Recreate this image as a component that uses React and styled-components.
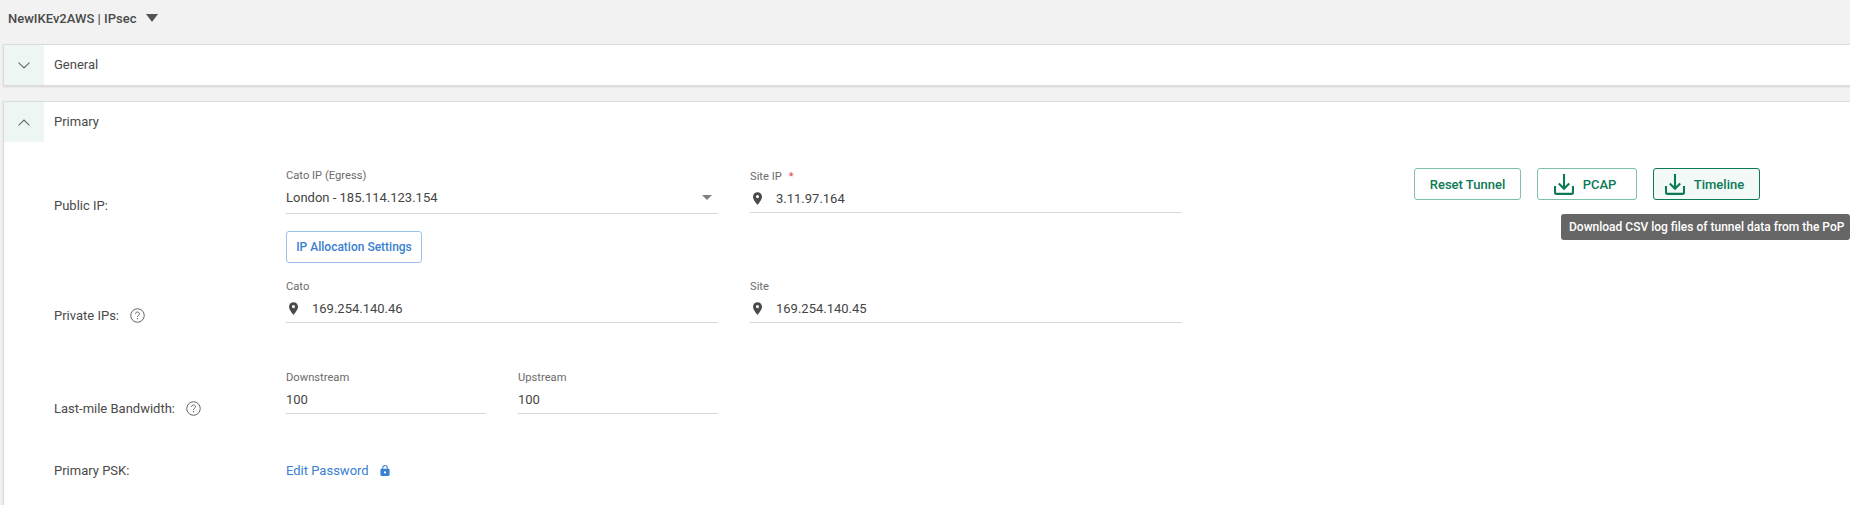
import React from "react";
import styled, { createGlobalStyle } from "styled-components";

const GlobalStyle = createGlobalStyle`
  html, body {
    margin: 0;
    padding: 0;
    background: #f2f2f2;
    overflow: hidden;
  }
  body {
    font-family: Roboto, "Liberation Sans", sans-serif;
    color: #4a4a4a;
  }
`;

const ChevronDown = () => (
  <svg width="12" height="7" viewBox="0 0 12 7" fill="none" stroke="#666" strokeWidth="1.1">
    <path d="M.6.6L6 6l5.4-5.4" />
  </svg>
);

const ChevronUp = () => (
  <svg width="12" height="7" viewBox="0 0 12 7" fill="none" stroke="#666" strokeWidth="1.1">
    <path d="M.6 6.4L6 1l5.4 5.4" />
  </svg>
);

const Pin = () => (
  <svg width="9" height="13" viewBox="0 0 10 14" fill="#4a4a4a">
    <path d="M5 0C2.2 0 0 2.2 0 5c0 3.6 5 9 5 9s5-5.4 5-9c0-2.8-2.2-5-5-5zm0 6.6A1.7 1.7 0 1 1 5 3.2a1.7 1.7 0 0 1 0 3.4z" />
  </svg>
);

const Help = () => (
  <svg width="15" height="15" viewBox="0 0 16 16" fill="none">
    <circle cx="8" cy="8" r="7.2" stroke="#5a5a5a" strokeWidth="1" />
    <path d="M5.9 6.3c0-1.2.9-2 2.1-2s2.1.8 2.1 1.9c0 1.6-2.1 1.6-2.1 3.2" stroke="#5a5a5a" strokeWidth="1" />
    <circle cx="8" cy="11.4" r=".7" fill="#5a5a5a" />
  </svg>
);

const Lock = () => (
  <svg width="10" height="11" viewBox="0 0 10 12" fill="#3a80d2">
    <path d="M8.6 4.2H8V3a3 3 0 0 0-6 0v1.2h-.6C.6 4.2 0 4.8 0 5.5v5.2c0 .7.6 1.3 1.4 1.3h7.2c.8 0 1.4-.6 1.4-1.3V5.5c0-.7-.6-1.3-1.4-1.3zM5 9.3a1.2 1.2 0 1 1 0-2.4 1.2 1.2 0 0 1 0 2.4zm1.9-5.1H3.1V3a1.9 1.9 0 0 1 3.8 0v1.2z" />
  </svg>
);

const Download = () => (
  <svg width="20" height="21" viewBox="0 0 20 21" fill="none" stroke="#0b7a55" strokeWidth="2.1">
    <path d="M1 12v6.5c0 .8.6 1.4 1.4 1.4h15.2c.8 0 1.4-.6 1.4-1.4V12" />
    <path d="M10 0v14.5M4.8 9.5l5.2 5.2 5.2-5.2" />
  </svg>
);

const Page = styled.div`
  width: 1850px;
  height: 505px;
  overflow: hidden;
`;

const TitleBar = styled.div`
  display: flex;
  align-items: center;
  height: 36px;
  padding-left: 8px;
  margin-bottom: 8px;
  font-size: 13px;
  font-weight: 500;
  color: #4a4a4a;
`;

const TitleArrow = styled.span`
  width: 0;
  height: 0;
  margin-left: 10px;
  border-left: 6px solid transparent;
  border-right: 6px solid transparent;
  border-top: 8px solid #555;
`;

const Card = styled.section`
  margin-left: 3px;
  margin-bottom: 15px;
  background: #fff;
  border: 1px solid #dcdcdc;
  border-right: 0;
  box-shadow: 0 1px 2px rgba(0, 0, 0, 0.12);
`;

const CardHeader = styled.div`
  display: flex;
  align-items: center;
  height: 40px;
  font-size: 13px;
  color: #4a4a4a;
`;

const CardTitle = styled.span`
  margin-top: -2px;
`;

const Toggle = styled.div`
  display: flex;
  align-items: center;
  justify-content: center;
  width: 40px;
  height: 40px;
  margin-right: 10px;
  background: #eef6f3;
`;

const Form = styled.div`
  padding: 26px 0 60px 50px;
`;

const Row = styled.div`
  display: flex;
  align-items: flex-start;
  margin-top: ${(p) => p.$top || 0}px;
`;

const RowLabel = styled.div`
  display: flex;
  align-items: center;
  gap: 11px;
  width: 232px;
  flex: none;
  height: 16px;
  margin-top: ${(p) => p.$top || 0}px;
  font-size: 13px;
  color: #4a4a4a;
`;

const Fields = styled.div`
  display: flex;
  gap: 32px;
`;

const Field = styled.div`
  width: ${(p) => p.$width || 432}px;
  margin-top: ${(p) => p.$top || 0}px;
`;

const Caption = styled.div`
  display: flex;
  gap: 7px;
  height: 14px;
  line-height: 16px;
  font-size: 11.2px;
  color: #6b6b6b;
`;

const Required = styled.span`
  color: #e8404a;
`;

const ValueLine = styled.div`
  display: flex;
  align-items: center;
  height: ${(p) => (p.$select ? 32 : 30)}px;
  padding-top: ${(p) => (p.$select ? 0 : 1)}px;
  padding-bottom: ${(p) => (p.$select ? 1 : 0)}px;
  box-sizing: border-box;
  border-bottom: 1px solid #d8d8d8;
  font-size: 13px;
  color: #444;
`;

const PinSlot = styled.span`
  display: flex;
  width: 26px;
  padding-left: 3px;
  box-sizing: border-box;
`;

const SelectArrow = styled.span`
  width: 0;
  height: 0;
  margin-left: auto;
  margin-right: 6px;
  border-left: 5px solid transparent;
  border-right: 5px solid transparent;
  border-top: 5px solid #808080;
`;

const Actions = styled.div`
  position: relative;
  display: flex;
  gap: 16px;
  margin-left: 232px;
`;

const ActionButton = styled.button`
  display: flex;
  align-items: center;
  justify-content: center;
  gap: 9px;
  width: ${(p) => p.$width}px;
  height: 32px;
  padding: 0 ${(p) => (p.$icon ? 4 : 0)}px 0 0;
  box-sizing: border-box;
  font-family: inherit;
  font-size: 13px;
  font-weight: 500;
  color: #0b7a55;
  background: ${(p) => (p.$active ? "#f3f9f7" : "#fff")};
  border: 1px solid ${(p) => (p.$active ? "#0b7a55" : "#7fc0aa")};
  border-radius: 3px;
`;

const Tooltip = styled.div`
  position: absolute;
  top: 46px;
  left: 147px;
  width: 289px;
  height: 26px;
  display: flex;
  align-items: center;
  padding-left: 8px;
  box-sizing: border-box;
  background: #666;
  border-radius: 3px;
  color: #fff;
  font-size: 12px;
  font-weight: 500;
  white-space: nowrap;
`;

const AllocButton = styled.button`
  display: block;
  width: 136px;
  height: 32px;
  margin: 17px 0 0 232px;
  padding: 0;
  box-sizing: border-box;
  font-family: inherit;
  font-size: 12px;
  font-weight: 500;
  color: #3a80d2;
  background: #fff;
  border: 1px solid #9cc2ea;
  border-radius: 3px;
`;

const PasswordLink = styled.a`
  display: flex;
  align-items: center;
  gap: 11px;
  height: 16px;
  font-size: 13px;
  color: #3a80d2;
`;

export default function App() {
  return (
    <Page>
      <GlobalStyle />
      <TitleBar>
        NewIKEv2AWS | IPsec
        <TitleArrow />
      </TitleBar>
      <Card>
        <CardHeader>
          <Toggle>
            <ChevronDown />
          </Toggle>
          <CardTitle>General</CardTitle>
        </CardHeader>
      </Card>
      <Card>
        <CardHeader>
          <Toggle>
            <ChevronUp />
          </Toggle>
          <CardTitle>Primary</CardTitle>
        </CardHeader>
        <Form>
          <Row>
            <RowLabel $top={29}>Public IP:</RowLabel>
            <Fields>
              <Field>
                <Caption>Cato IP (Egress)</Caption>
                <ValueLine $select>
                  London - 185.114.123.154
                  <SelectArrow />
                </ValueLine>
              </Field>
              <Field $top={1}>
                <Caption>
                  Site IP <Required>*</Required>
                </Caption>
                <ValueLine>
                  <PinSlot>
                    <Pin />
                  </PinSlot>
                  3.11.97.164
                </ValueLine>
              </Field>
            </Fields>
            <Actions>
              <ActionButton $width={107}>Reset Tunnel</ActionButton>
              <ActionButton $width={100} $icon>
                <Download />
                PCAP
              </ActionButton>
              <ActionButton $width={107} $icon $active>
                <Download />
                Timeline
              </ActionButton>
              <Tooltip>Download CSV log files of tunnel data from the PoP</Tooltip>
            </Actions>
          </Row>
          <AllocButton>IP Allocation Settings</AllocButton>
          <Row $top={16}>
            <RowLabel $top={28}>
              Private IPs: <Help />
            </RowLabel>
            <Fields>
              <Field>
                <Caption>Cato</Caption>
                <ValueLine>
                  <PinSlot>
                    <Pin />
                  </PinSlot>
                  169.254.140.46
                </ValueLine>
              </Field>
              <Field>
                <Caption>Site</Caption>
                <ValueLine>
                  <PinSlot>
                    <Pin />
                  </PinSlot>
                  169.254.140.45
                </ValueLine>
              </Field>
            </Fields>
          </Row>
          <Row $top={47}>
            <RowLabel $top={30}>
              Last-mile Bandwidth: <Help />
            </RowLabel>
            <Fields>
              <Field $width={200}>
                <Caption>Downstream</Caption>
                <ValueLine>100</ValueLine>
              </Field>
              <Field $width={200}>
                <Caption>Upstream</Caption>
                <ValueLine>100</ValueLine>
              </Field>
            </Fields>
          </Row>
          <Row $top={46}>
            <RowLabel>Primary PSK:</RowLabel>
            <PasswordLink>
              Edit Password <Lock />
            </PasswordLink>
          </Row>
        </Form>
      </Card>
    </Page>
  );
}
